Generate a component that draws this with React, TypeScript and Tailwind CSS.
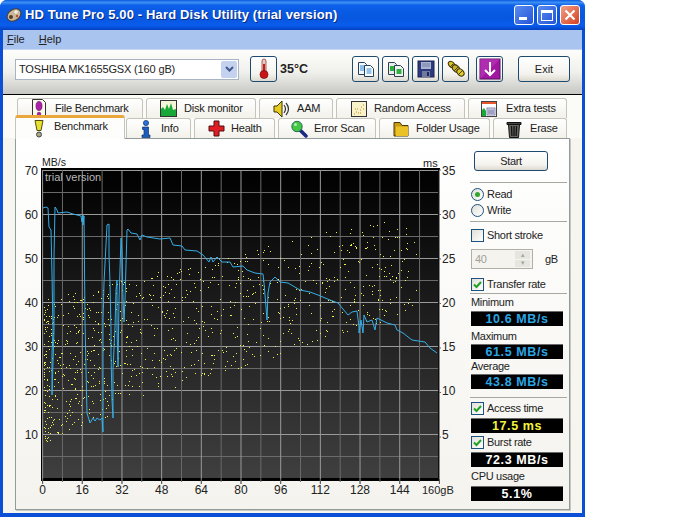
import React from 'react';

const speedLine =
  '43,208 46,207 48,208 49,227 51,230 52,275 53,330 52,353 52,395 54,330 54,257 55,207 57,210 58,213 67,212 73,214 81,216 82,222 83,215 83,225 84,216 85,320 86,370 87,413 90,423 93,418 95,421 97,418 100,420 102,418 103,432 103,320 104,283 107,225 109,224 109,255 110,283 111,330 111,353 112,400 113,418 113,370 115,327 116,290 117,280 117,330 118,367 119,300 121,238 122,253 123,297 124,322 125,300 127,230 128,229 131,233 137,234 140,240 142,235 147,237 160,239 170,238 173,245 182,246 185,250 197,251 203,255 209,262 211,257 213,262 217,257 222,262 230,262 233,267 243,266 247,270 255,273 263,274 264,283 266,307 267,320 268,293 270,282 275,277 280,282 288,283 300,290 310,292 318,295 330,300 338,303 348,315 352,312 357,311 359,327 359,333 361,320 363,333 364,315 367,322 372,320 375,330 377,318 387,323 395,325 397,330 403,333 412,340 425,342 430,348 437,353';

// access time scatter, seeded so the picture stays the same
function makeDots() {
    let seed = 12345;
    const rnd = () => {
        seed = (seed * 16807) % 2147483647;
        return seed / 2147483647;
    };
    const dots: { x: number; y: number }[] = [];
    for (let i = 0; i < 950; i++) {
        const x = 44 + 372 * Math.pow(rnd(), 1.7);
        const top = 300 - (x - 42) * 0.24;
        const bottom = x < 170 ? 444 - (x - 42) * 0.42 : 390 - (x - 170) * 0.32;
        const y = top + (bottom - top) * rnd();
        dots.push({ x: Math.round(x), y: Math.round(y) });
    }
    return dots;
}
const dots = makeDots();

const gridX = Array.from({ length: 21 }, (_, i) => i);
const gridY = Array.from({ length: 14 }, (_, i) => i);
const px = (i: number) => 42.6 + i * 19.84;
const py = (i: number) => 170 + i * 22;

const BenchChart = () => (
    <svg width={450} height={370} viewBox="16 139 450 370" className="block shrink-0">
        <defs>
            <linearGradient id="plotBg" x1="0" y1="0" x2="0" y2="1">
                <stop offset="0" stopColor="#000000" />
                <stop offset="1" stopColor="#3f3f3f" />
            </linearGradient>
        </defs>
        <rect x={41} y={168} width={399} height={313} fill="#000" />
        <rect x={43} y={170} width={395} height={308} fill="url(#plotBg)" />
        {gridY.map((i) => (
            <line
                key={i}
                x1={43}
                x2={438}
                y1={py(i) + 0.5}
                y2={py(i) + 0.5}
                stroke={i % 2 === 0 ? '#9a9a9a' : '#6a6a6a'}
            />
        ))}
        {gridX.map((i) => (
            <line
                key={i}
                x1={px(i)}
                x2={px(i)}
                y1={170}
                y2={i % 2 === 0 ? 484 : 482}
                stroke={i % 2 === 0 ? '#9a9a9a' : '#6a6a6a'}
            />
        ))}
        {[0, 2, 4, 6, 8, 10, 12, 14, 16, 18, 20].map((i) => (
            <line key={i} x1={px(i)} x2={px(i)} y1={479} y2={484} stroke="#555" />
        ))}
        {dots.map((d, i) => (
            <rect key={i} x={d.x} y={d.y} width={1} height={1} fill="#f2f24a" />
        ))}
        <polyline points={speedLine} fill="none" stroke="#36aee6" strokeWidth={1} />
        <g fontSize={12} fill="#222">
            <text x={42} y={166} fontSize={10.5}>MB/s</text>
            <text x={423} y={167} fontSize={11}>ms</text>
            <text x={45} y={181} fill="#b8b8b8" fontSize={11}>trial version</text>
            {[70, 60, 50, 40, 30, 20, 10].map((v, i) => (
                <text key={v} x={38} y={174.5 + i * 44} textAnchor="end">{v}</text>
            ))}
            {[35, 30, 25, 20, 15, 10, 5].map((v, i) => (
                <text key={v} x={442} y={174.5 + i * 44}>{v}</text>
            ))}
            {[0, 16, 32, 48, 64, 80, 96, 112, 128, 144].map((v, i) => (
                <text key={v} x={px(i * 2)} y={494} textAnchor="middle">{v}</text>
            ))}
            <text x={422} y={494} fontSize={11}>160gB</text>
        </g>
        {[0, 1, 2, 3, 4, 5, 6].map((i) => (
            <line key={i} x1={439} x2={441} y1={170 + i * 44.5} y2={170 + i * 44.5} stroke="#666" />
        ))}
    </svg>
);

/* ---------- small drawn icons ---------- */

const LogoIcon = () => (
    <svg width={18} height={18} viewBox="0 0 18 18">
        <ellipse cx={9} cy={9} rx={7.5} ry={5.5} transform="rotate(-35 9 9)" fill="#c9b79a" stroke="#4a3a30" />
        <circle cx={6} cy={11} r={2} fill="#5a3a28" />
        <circle cx={11} cy={6} r={1.8} fill="#f4f0e4" />
        <circle cx={12} cy={10} r={1.2} fill="#c04a30" />
    </svg>
);

const Thermometer = () => (
    <svg width={12} height={22} viewBox="0 0 12 22">
        <rect x={4} y={1} width={4} height={14} rx={2} fill="#e8c8c0" stroke="#7a3020" strokeWidth={0.7} />
        <rect x={5} y={6} width={2} height={10} fill="#d01818" />
        <circle cx={6} cy={16.5} r={4} fill="#cc1414" stroke="#701010" strokeWidth={0.7} />
    </svg>
);

const CopyDocs = () => (
    <svg width={18} height={18} viewBox="0 0 18 18">
        <path d="M1.5 2.5h6l2 2v10h-8z" fill="#f4f8fc" stroke="#20405e" />
        <path d="M7.5 5.5h6l3 3v8h-9z" fill="#fff" stroke="#20405e" />
        <path d="M3 6h4M3 8h4M3 10h4M9.5 9h5M9.5 11h5M9.5 13h5" stroke="#2a8ad8" />
    </svg>
);

const CopyGreen = () => (
    <svg width={18} height={18} viewBox="0 0 18 18">
        <path d="M1.5 2.5h6l2 2v10h-8z" fill="#e8ecec" stroke="#30404a" />
        <path d="M7.5 5.5h6l3 3v8h-9z" fill="#eef2f0" stroke="#30404a" />
        <rect x={3} y={6} width={4} height={5} fill="#30b040" />
        <rect x={9.5} y={9} width={5} height={5} fill="#30b040" />
    </svg>
);

const Floppy = () => (
    <svg width={18} height={18} viewBox="0 0 18 18">
        <rect x={1} y={1} width={16} height={16} fill="#2c3a80" stroke="#1a2050" />
        <rect x={4} y={2} width={10} height={7} fill="#aab4d0" />
        <path d="M5 4h8M5 6h8" stroke="#7080a8" />
        <rect x={5} y={11} width={8} height={6} fill="#707a9c" />
        <rect x={10} y={12} width={2} height={4} fill="#20285c" />
    </svg>
);

const ChainIcon = () => (
    <svg width={20} height={18} viewBox="0 0 20 18">
        <g stroke="#3a3208" strokeWidth={1}>
            <ellipse cx={5.5} cy={4.5} rx={2.6} ry={3.6} transform="rotate(-45 5.5 4.5)" fill="#d8c226" />
            <ellipse cx={10} cy={8.500} rx={3} ry={4.2} transform="rotate(-45 10 8.500)" fill="#c8b020" />
            <ellipse cx={14.500} cy={12.500} rx={3} ry={4} transform="rotate(-45 14.500 12.500)" fill="#e0ca2c" />
        </g>
        <path d="M4 7l3-3M8 11l4-4M12 15l4-4" stroke="#4a4010" />
    </svg>
);

const DownIcon = () => (
    <svg width={22} height={22} viewBox="0 0 22 22">
        <rect x={1} y={1} width={20} height={20} fill="#a018a0" stroke="#5a0c66" />
        <path d="M1 1h20L1 21z" fill="#c040c0" opacity={0.5} />
        <path d="M11 4v13M6 12l5 5 5-5" stroke="#fff" strokeWidth={2} fill="none" />
    </svg>
);

const PageAlert = () => (
    <svg width={16} height={20} viewBox="0 0 16 20">
        <path d="M1.5.5h10l3 3v16h-13z" fill="#fbf8ee" stroke="#333" />
        <ellipse cx={8} cy={7} rx={3} ry={4.5} fill="#b020b0" stroke="#501050" strokeWidth={0.6} />
        <circle cx={8} cy={15} r={1.8} fill="#b020b0" stroke="#501050" strokeWidth={0.6} />
    </svg>
);

const DiskMonitorIcon = () => (
    <svg width={17} height={17} viewBox="0 0 17 17">
        <rect x={0.5} y={0.5} width={16} height={16} fill="#f4f4d8" stroke="#333" />
        <path d="M1 16V9l2-2 2 3 2-6 2 5 2-6 2 7 3-1v7z" fill="#18a838" />
    </svg>
);

const SpeakerIcon = () => (
    <svg width={18} height={18} viewBox="0 0 18 18">
        <path d="M1 6h3l5-5v16l-5-5H1z" fill="#e8cc20" stroke="#3a3208" />
        <path d="M11 5q3 4 0 8M13 3q5 6 0 12" stroke="#333" fill="none" strokeWidth={1.200} />
    </svg>
);

const ScatterIcon = () => (
    <svg width={16} height={16} viewBox="0 0 16 16">
        <rect x={0.5} y={0.5} width={15} height={15} fill="#faf2c8" stroke="#333" />
        <path d="M3 13h1M5 11h1M7 12h1M6 8h1M9 9h1M10 6h1M12 4h1M12 8h1M4 8h1M9 12h1" stroke="#c08a20" />
    </svg>
);

const ExtraIcon = () => (
    <svg width={16} height={16} viewBox="0 0 16 16">
        <rect x={0.5} y={0.5} width={15} height={15} fill="#fff" stroke="#444" />
        <rect x={1} y={1} width={14} height={2} fill="#e8542c" />
        <path d="M1 15V9l2-2 2 3v5z" fill="#18a838" />
        <rect x={6} y={7} width={8} height={7} fill="#e4e4ee" stroke="#5a5a90" strokeWidth={0.7} />
        <path d="M8 8v5M10 8v5M12 8v5M7 10h6M7 12h6" stroke="#7070a8" strokeWidth={0.7} />
    </svg>
);

const BulbIcon = () => (
    <svg width={12} height={19} viewBox="0 0 12 19">
        <path d="M2 1.500h8l-2 10H4z" fill="#e8e030" stroke="#504c10" strokeLinejoin="round" />
        <circle cx={6} cy={15.5} r={2.5} fill="#a8a888" stroke="#444" />
    </svg>
);

const InfoIcon = () => (
    <svg width={12} height={18} viewBox="0 0 12 18">
        <circle cx={6} cy={3} r={2.6} fill="#2a70d8" stroke="#10306a" strokeWidth={0.7} />
        <path d="M2.5 7h6v8h1.5v2.5H2v-2.5h2v-5.5H2.500z" fill="#1c5cc0" stroke="#10306a" strokeWidth={0.7} />
    </svg>
);

const CrossIcon = () => (
    <svg width={17} height={17} viewBox="0 0 17 17">
        <path d="M6 1h5v5h5v5h-5v5H6v-5H1V6h5z" fill="#e01c24" stroke="#501010" />
    </svg>
);

const LensIcon = () => (
    <svg width={18} height={18} viewBox="0 0 18 18">
        <path d="M10 10l6 6" stroke="#1a2a80" strokeWidth={3.5} strokeLinecap="round" />
        <circle cx={7} cy={6.5} r={5.2} fill="#44c844" stroke="#2a6a5a" />
        <circle cx={5.5} cy={4.5} r={1.5} fill="#b0f0b0" />
    </svg>
);

const FolderIcon = () => (
    <svg width={16} height={17} viewBox="0 0 16 17">
        <path d="M1 2.500h6l2 3h6v10.500H1z" fill="#c89c10" stroke="#4a3a08" />
        <path d="M3 6.500h12v9.500H3z" fill="#eac228" />
    </svg>
);

const TrashIcon = () => (
    <svg width={16} height={18} viewBox="0 0 16 18">
        <path d="M1 2.500h14v2H1z" fill="#444" stroke="#111" />
        <path d="M2.500 4.500h11l-1 13h-9z" fill="#666662" stroke="#111" />
        <path d="M5.500 6l.4 10M8 6v10M10.500 6l-.4 10" stroke="#111" strokeWidth={1.300} />
    </svg>
);

/* ---------- form bits ---------- */

const xpBtn =
    'flex items-center justify-center rounded-[3px] border border-[#1e4a70] bg-[linear-gradient(#ffffff,#f4f3ee_70%,#dcd9cf)]';

const IconButton = ({ children, className }: { children: React.ReactNode; className?: string }) => (
    <div className={`${xpBtn} w-[27px] h-[26px] ${className ?? ''}`}>{children}</div>
);

const CheckBox = ({ checked }: { checked?: boolean }) => (
    <div className="w-[13px] h-[13px] border border-[#1c5180] bg-[linear-gradient(135deg,#e0e0d8,#ffffff)] flex items-center justify-center shrink-0">
        {checked && (
            <svg width={11} height={11} viewBox="0 0 11 11">
                <path d="M2 5.500l2.500 2.500 4.500-5" fill="none" stroke="#21a121" strokeWidth={2} />
            </svg>
        )}
    </div>
);

const Radio = ({ checked }: { checked?: boolean }) => (
    <div className="w-[13px] h-[13px] rounded-full border border-[#1c5180] bg-[linear-gradient(135deg,#e0e0d8,#ffffff)] flex items-center justify-center shrink-0">
        {checked && <div className="w-[5px] h-[5px] rounded-full bg-[#2fa52f]" />}
    </div>
);

const Separator = ({ className }: { className?: string }) => (
    <div className={`ml-[4px] w-[97px] h-px bg-[#a8a8a0] shrink-0 ${className ?? ''}`} />
);

const Value = ({ text, color }: { text: string; color: string }) => (
    <div
        className={`ml-[5px] w-[92px] h-[15px] shrink-0 bg-black border-t border-[#6a6a6a] flex items-center justify-center font-bold text-[12.500px] tracking-[0.6px] leading-none ${color}`}
    >
        {text}
    </div>
);

const Label = ({ text, className }: { text: string; className?: string }) => (
    <div className={`ml-[5px] flex items-center shrink-0 ${className ?? ''}`}>{text}</div>
);

const Sidebar = () => (
    <div className="w-[103px] flex flex-col text-[11px] tracking-[-0.3px] text-[#222]">
        <div className={`${xpBtn} ml-[8px] mt-[12px] w-[74px] h-[20px] shrink-0`}>Start</div>
        <Separator className="mt-[11px]" />
        <div className="ml-[5px] mt-[3px] h-[16px] flex items-center gap-[3px]">
            <Radio checked /> Read
        </div>
        <div className="ml-[5px] h-[16px] flex items-center gap-[3px]">
            <Radio /> Write
        </div>
        <Separator className="mt-[3px]" />
        <div className="ml-[5px] mt-[5px] h-[16px] flex items-center gap-[3px]">
            <CheckBox /> Short stroke
        </div>
        <div className="mt-[6px] h-[20px] flex items-center shrink-0">
            <div className="ml-[5px] w-[62px] h-[20px] border border-[#b0b0a8] bg-[#f4f3ee] flex items-center justify-between pl-[3px] pr-[2px] text-[#a0a098]">
                40
                <div className="w-[15px] h-[16px] flex flex-col gap-px">
                    <div className="flex-1 bg-[#e6e6e0] flex items-center justify-center text-[6px] leading-none text-[#a8a8a0]">▲</div>
                    <div className="flex-1 bg-[#e6e6e0] flex items-center justify-center text-[6px] leading-none text-[#a8a8a0]">▼</div>
                </div>
            </div>
            <span className="ml-[12px]">gB</span>
        </div>
        <div className="ml-[5px] mt-[7px] h-[16px] flex items-center gap-[3px]">
            <CheckBox checked /> Transfer rate
        </div>
        <Separator className="mt-px" />
        <Label text="Minimum" className="h-[17px]" />
        <Value text="10.6 MB/s" color="text-[#2aa6e4]" />
        <Label text="Maximum" className="mt-[2px] h-[16px]" />
        <Value text="61.5 MB/s" color="text-[#2aa6e4]" />
        <Label text="Average" className="h-[15px]" />
        <Value text="43.8 MB/s" color="text-[#2aa6e4]" />
        <Separator className="mt-[8px]" />
        <div className="ml-[5px] h-[20px] flex items-center gap-[3px] shrink-0">
            <CheckBox checked /> Access time
        </div>
        <Value text="17.5 ms" color="text-[#f4f43c]" />
        <div className="ml-[5px] h-[19px] flex items-center gap-[3px] shrink-0">
            <CheckBox checked /> Burst rate
        </div>
        <Value text="72.3 MB/s" color="text-white" />
        <Label text="CPU usage" className="h-[19px]" />
        <Value text="5.1%" color="text-white" />
    </div>
);

/* ---------- tabs ---------- */

const Tab = ({
    label,
    icon,
    width,
    iconBox,
}: {
    label: string;
    icon: React.ReactNode;
    width: string;
    iconBox: string;
}) => (
    <div
        className={`${width} h-[20px] shrink-0 flex items-center rounded-t-[3px] border border-b-0 border-[#c4c4bc] bg-[linear-gradient(#ffffff,#f2f1ea)] text-[11px] tracking-[-0.2px] text-[#222]`}
    >
        <div className={`${iconBox} flex items-center justify-center`}>{icon}</div>
        <span className="whitespace-nowrap">{label}</span>
    </div>
);

export default function App() {
    return (
        <div className="w-[683px] h-[517px] bg-white overflow-hidden font-['Liberation_Sans',Arial,sans-serif]">
            <div className="w-[585px] h-[517px] rounded-t-[7px] bg-[#0a4fd6] flex flex-col overflow-hidden">
                {/* Title bar */}
                <div className="h-[30px] shrink-0 flex items-center pl-[5px] pr-[5px] bg-[linear-gradient(#0a5ae0,#3d8ff5_8%,#0c5fe8_18%,#0757e0_60%,#0a5cec_85%,#0440c0)]">
                    <LogoIcon />
                    <span className="ml-[2px] text-white font-bold text-[13px] tracking-[0.15px] whitespace-nowrap [text-shadow:1px_1px_0_#0a2a80]">
                        HD Tune Pro 5.00 - Hard Disk Utility (trial version)
                    </span>
                    <div className="ml-auto flex items-center gap-[3px]">
                        <div className="w-[20px] h-[20px] rounded-[3px] border border-white bg-[linear-gradient(135deg,#5a8cf0,#2454d8)] flex items-end pl-[4px] pb-[4px]">
                            <div className="w-[8px] h-[3px] bg-white" />
                        </div>
                        <div className="w-[20px] h-[20px] rounded-[3px] border border-white bg-[linear-gradient(135deg,#5a8cf0,#2454d8)] flex items-center justify-center">
                            <div className="w-[12px] h-[11px] border border-white border-t-[3px]" />
                        </div>
                        <div className="w-[20px] h-[20px] rounded-[3px] border border-white bg-[linear-gradient(135deg,#f0a088,#d84020)] flex items-center justify-center">
                            <svg width={12} height={12} viewBox="0 0 12 12">
                                <path d="M1.500 1.500l9 9M10.500 1.500l-9 9" stroke="#fff" strokeWidth={2.200} />
                            </svg>
                        </div>
                    </div>
                </div>

                <div className="h-[483px] shrink-0 mx-[3px] flex flex-col bg-[#f6f5f0]">
                    {/* Menu */}
                    <div className="h-[20px] shrink-0 flex items-center gap-[14px] pl-[4px] bg-[#a9c4ee] border-b border-[#c8d8f4] text-[11px] text-[#222]">
                        <span><span className="underline">F</span>ile</span>
                        <span><span className="underline">H</span>elp</span>
                    </div>

                    {/* Toolbar */}
                    <div className="h-[45px] shrink-0 flex items-center pl-[12px] pb-[6px] border-b border-black bg-[linear-gradient(#fdfdfb,#f0f0ec_50%,#c6c6c2)]">
                        <div className="w-[224px] h-[21px] bg-white border border-[#a8b4c4] flex items-center pl-[3px] pr-[1px] text-[11px] tracking-[-0.15px] text-[#222]">
                            <span className="whitespace-nowrap">TOSHIBA MK1655GSX (160 gB)</span>
                            <div className="ml-auto w-[16px] h-[17px] rounded-[2px] bg-[#c4d2f0] flex items-center justify-center">
                                <svg width={9} height={7} viewBox="0 0 9 7">
                                    <path d="M1 1l3.500 3.500L8 1" fill="none" stroke="#40588a" strokeWidth={2} />
                                </svg>
                            </div>
                        </div>
                        <IconButton className="ml-[11px]"><Thermometer /></IconButton>
                        <span className="ml-[3px] w-[34px] text-[12.500px] font-bold text-[#222]">35°C</span>
                        <IconButton className="ml-[38px]"><CopyDocs /></IconButton>
                        <IconButton className="ml-[3px]"><CopyGreen /></IconButton>
                        <IconButton className="ml-[3px]"><Floppy /></IconButton>
                        <IconButton className="ml-[3px]"><ChainIcon /></IconButton>
                        <IconButton className="ml-[7px]"><DownIcon /></IconButton>
                        <div className={`${xpBtn} ml-[15px] w-[52px] h-[26px] text-[11px] text-[#222]`}>Exit</div>
                    </div>

                    {/* Tabs */}
                    <div className="h-[43px] shrink-0 flex flex-col pt-[3px] bg-[#fbfbf8]">
                        <div className="flex gap-[3px] pl-[14px]">
                            <Tab label="File Benchmark" icon={<PageAlert />} width="w-[126px]" iconBox="w-[37px] pl-[4px]" />
                            <Tab label="Disk monitor" icon={<DiskMonitorIcon />} width="w-[110px]" iconBox="w-[37px] pl-[6px]" />
                            <Tab label="AAM" icon={<SpeakerIcon />} width="w-[74px]" iconBox="w-[37px] pl-[6px]" />
                            <Tab label="Random Access" icon={<ScatterIcon />} width="w-[129px]" iconBox="w-[37px] pl-[6px]" />
                            <Tab label="Extra tests" icon={<ExtraIcon />} width="w-[99px]" iconBox="w-[37px] pl-[2px]" />
                        </div>
                        <div className="flex gap-[3px] pl-[12px] items-end h-[20px]">
                            <div className="relative z-10 -mb-px -mr-[2px] w-[110px] h-[24px] shrink-0 flex items-center rounded-t-[3px] border-x border-[#c4c4bc] border-t-[3px] border-t-[#eba63c] bg-[#fdfdfb] text-[11px] tracking-[-0.2px] text-[#222] pb-[5px]">
                                <div className="w-[38px] pl-[7px] flex items-center justify-center pt-[4px]"><BulbIcon /></div>
                                Benchmark
                            </div>
                            <Tab label="Info" icon={<InfoIcon />} width="w-[65px]" iconBox="w-[34px] pl-[4px]" />
                            <Tab label="Health" icon={<CrossIcon />} width="w-[81px]" iconBox="w-[36px] pl-[6px]" />
                            <Tab label="Error Scan" icon={<LensIcon />} width="w-[98px]" iconBox="w-[35px] pl-[5px]" />
                            <Tab label="Folder Usage" icon={<FolderIcon />} width="w-[111px]" iconBox="w-[36px] pl-[6px]" />
                            <Tab label="Erase" icon={<TrashIcon />} width="w-[74px]" iconBox="w-[36px] pl-[4px]" />
                        </div>
                    </div>

                    {/* Panel */}
                    <div className="ml-[12px] w-[555px] h-[372px] shrink-0 flex border border-[#919b9c] bg-[linear-gradient(#ffffff,#f4f3ee)] shadow-[1px_1px_0_#c8c8c0]">
                        <BenchChart />
                        <Sidebar />
                    </div>
                </div>
            </div>
        </div>
    );
}
